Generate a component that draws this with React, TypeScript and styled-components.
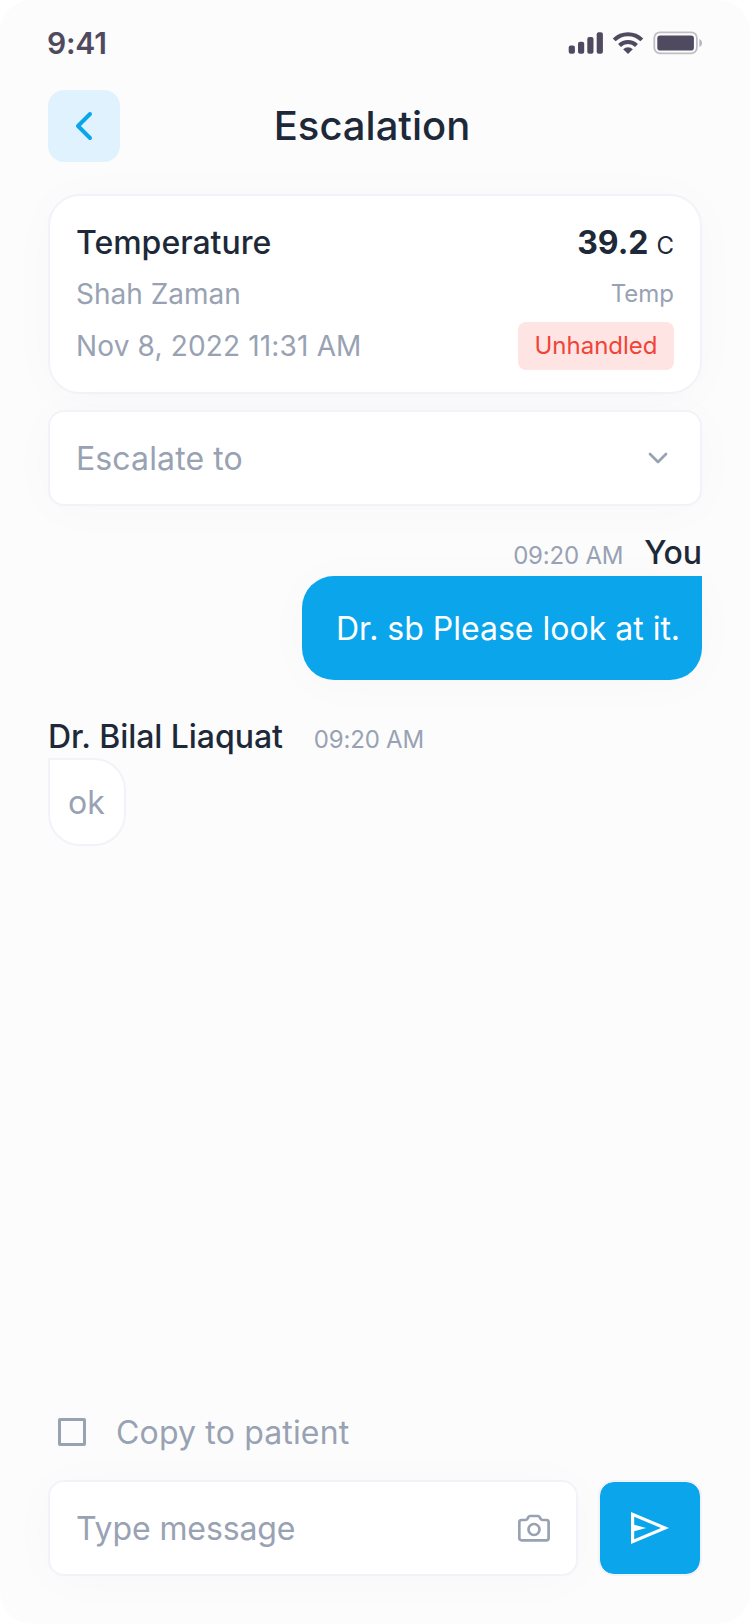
import React from "react";
import styled, { createGlobalStyle } from "styled-components";

const color = {
  ink: "#1d2939",
  muted: "#98a2b3",
  status: "#4f4a5f",
  brand: "#0ba5ec",
  line: "#f2f2f9",
};

const Global = createGlobalStyle`
  * { box-sizing: border-box; }
  body {
    margin: 0;
    background: #fff;
    font-family: Inter, "Liberation Sans", sans-serif;
    font-optical-sizing: none;
  }
  button, input { font: inherit; }
`;

const Screen = styled.main`
  width: 750px;
  height: 1624px;
  padding: 0 48px 48px;
  display: flex;
  flex-direction: column;
  background: #fcfcfc;
  border-radius: 32px;
`;

const StatusBar = styled.div`
  height: 90px;
  margin-left: -1px;
  padding-bottom: 4px;
  display: flex;
  align-items: center;
  justify-content: space-between;
`;

const Text = styled.span<{
  $size?: number;
  $weight?: number;
  $color?: string;
  $spacing?: number;
}>`
  font-size: ${(p) => p.$size ?? 32}px;
  font-weight: ${(p) => p.$weight ?? 400};
  color: ${(p) => p.$color ?? color.muted};
  letter-spacing: ${(p) => p.$spacing ?? 0}px;
  line-height: 1.2;
  white-space: nowrap;
`;

const Header = styled.header`
  display: grid;
  grid-template-columns: 72px 1fr 78px;
  align-items: center;
  height: 72px;
  margin-bottom: 32px;
`;

const BackButton = styled.button`
  width: 72px;
  height: 72px;
  padding: 0;
  border: 0;
  border-radius: 16px;
  background: #e0f2fe;
  display: grid;
  place-items: center;
`;

const Title = styled.h1`
  margin: 0;
  text-align: center;
  font-size: 40px;
  font-weight: 500;
  line-height: 48px;
  color: ${color.ink};
`;

const Panel = styled.section`
  background: #fff;
  border: 2px solid ${color.line};
  box-shadow: 0 4px 50px rgba(0, 0, 0, 0.022);
`;

const ReadingCard = styled(Panel)`
  height: 200px;
  border-radius: 32px;
  padding: 28px 26px 22px;
  margin-bottom: 16px;
`;

const CardRow = styled.div<{ $height: number; $gap?: number; $align?: string }>`
  height: ${(p) => p.$height}px;
  margin-bottom: ${(p) => p.$gap ?? 0}px;
  display: flex;
  align-items: ${(p) => p.$align ?? "center"};
  justify-content: space-between;
`;

const CardDetail = styled(Text)`
  padding-top: 2px;
`;

const Reading = styled.div`
  display: flex;
  align-items: baseline;
  gap: 8px;
`;

const Badge = styled.span`
  height: 48px;
  width: 156px;
  border-radius: 8px;
  background: #ffe4e4;
  color: #f04438;
  font-size: 24px;
  font-weight: 400;
  line-height: 48px;
  text-align: center;
`;

const Field = styled(Panel)<{ $right: number }>`
  height: 96px;
  border-radius: 16px;
  padding: 0 ${(p) => p.$right}px 0 26px;
  display: flex;
  align-items: center;
  justify-content: space-between;

  & > span { padding-top: 2px; }
`;

const Conversation = styled.section`
  flex: 1;
  display: flex;
  flex-direction: column;
`;

const Message = styled.article<{ $mine?: boolean; $top: number; $gap: number }>`
  margin-top: ${(p) => p.$top}px;
  display: flex;
  flex-direction: column;
  align-items: ${(p) => (p.$mine ? "flex-end" : "flex-start")};
  gap: ${(p) => p.$gap}px;
`;

const Byline = styled.div<{ $gap: number }>`
  height: 38px;
  display: flex;
  align-items: baseline;
  gap: ${(p) => p.$gap}px;
`;

const SentBubble = styled.div`
  width: 400px;
  height: 104px;
  padding: 2px 0 0 34px;
  display: flex;
  align-items: center;
  border-radius: 32px 0 32px 32px;
  background: ${color.brand};
  box-shadow: 0 4px 50px rgba(0, 0, 0, 0.022);
`;

const ReceivedBubble = styled.div`
  width: 78px;
  height: 88px;
  padding: 2px 0 0 18px;
  display: flex;
  align-items: center;
  border: 2px solid ${color.line};
  border-radius: 0 32px 32px 32px;
  background: #fff;
`;

const CopyOption = styled.label`
  height: 38px;
  margin: 0 0 29px 10px;
  display: flex;
  align-items: center;
  gap: 30px;

  & > span:last-child { padding-top: 2px; }
`;

const Checkbox = styled.span`
  width: 28px;
  height: 28px;
  border: 3px solid ${color.muted};
  border-radius: 2px;
`;

const Composer = styled.div`
  display: flex;
  gap: 20px;
`;

const MessageField = styled(Field)`
  width: 530px;
`;

const SendButton = styled.button`
  width: 104px;
  height: 96px;
  padding: 0;
  border: 2px solid ${color.line};
  border-radius: 16px;
  background: ${color.brand};
  background-clip: padding-box;
  display: grid;
  place-items: center;
`;

const StatusIcons = () => (
  <svg width="134" height="24" viewBox="568 31 134 24" fill={color.status}>
    <rect x="568.7" y="45.5" width="6.2" height="8.3" rx="2" />
    <rect x="578" y="41.7" width="6.2" height="12.1" rx="2" />
    <rect x="587.3" y="37" width="6.2" height="16.8" rx="2" />
    <rect x="596.7" y="32.2" width="6.2" height="21.6" rx="2" />
    <g fill="none" stroke={color.status}>
      <path d="M614.2 39.9a19.5 19.5 0 0 1 27.6 0" strokeWidth="4.1" />
      <path d="M619.5 45.5a12 12 0 0 1 17 0" strokeWidth="4.1" />
    </g>
    <path d="M623.2 49.3a6.8 6.8 0 0 1 9.6 0L628 54z" />
    <rect x="654.3" y="32.3" width="42.6" height="21" rx="5.6" fill="none" stroke={color.status} strokeOpacity=".35" strokeWidth="1.8" />
    <rect x="657.3" y="35.5" width="36.6" height="15" rx="2.8" />
    <path d="M699.3 39v8c1.7-.7 2.7-2.2 2.7-4s-1-3.3-2.7-4z" fillOpacity=".4" />
  </svg>
);

const BackIcon = () => (
  <svg width="24" height="32" viewBox="0 0 24 32" fill="none" stroke={color.brand} strokeWidth="4" strokeLinecap="round" strokeLinejoin="round">
    <path d="M18 4 6 16l12 12" />
  </svg>
);

const DownIcon = () => (
  <svg width="20" height="12" viewBox="0 0 20 12" fill="none" stroke={color.muted} strokeWidth="2.7" strokeLinecap="round" strokeLinejoin="round">
    <path d="m2 2 8 8 8-8" />
  </svg>
);

const CameraIcon = () => (
  <svg width="32" height="28" viewBox="0 0 32 28" fill="none" stroke={color.muted} strokeWidth="2.7" strokeLinejoin="round">
    <path d="M3.4 6H7.5c.8 0 1.5-.4 1.9-1.1l1.1-2c.3-.6.9-.9 1.5-.9h8c.6 0 1.2.3 1.5.9l1.1 2c.4.7 1.1 1.1 1.9 1.1h4.1A2.2 2.2 0 0 1 30.6 8.2v16A2.2 2.2 0 0 1 28.4 26.3H3.5a2.2 2.2 0 0 1-2.2-2.2v-16A2.2 2.2 0 0 1 3.4 6z" />
    <circle cx="16" cy="15.5" r="5.5" />
  </svg>
);

const SendIcon = () => (
  <svg width="38" height="32" viewBox="0 0 38 32">
    <path fillRule="evenodd" fill="#fff" d="M0 0 38 16 0 32zM3.2 4.8v8L15 16 3.2 19.2v8L30 16z" />
  </svg>
);

export default function App() {
  return (
    <>
      <Global />
      <Screen>
        <StatusBar>
          <Text $size={30} $weight={600} $color={color.status} $spacing={-0.2}>9:41</Text>
          <StatusIcons />
        </StatusBar>
        <Header>
          <BackButton aria-label="Back"><BackIcon /></BackButton>
          <Title>Escalation</Title>
        </Header>
        <ReadingCard>
          <CardRow $height={38} $gap={15} $align="baseline">
            <Text $weight={500} $color={color.ink}>Temperature</Text>
            <Reading>
              <Text $weight={700} $color={color.ink}>39.2</Text>
              <Text $size={24} $color={color.ink}>C</Text>
            </Reading>
          </CardRow>
          <CardRow $height={34} $gap={11}>
            <CardDetail $size={28}>Shah Zaman</CardDetail>
            <Text $size={24}>Temp</Text>
          </CardRow>
          <CardRow $height={48}>
            <CardDetail $size={28} $spacing={0.16}>Nov 8, 2022 11:31 AM</CardDetail>
            <Badge>Unhandled</Badge>
          </CardRow>
        </ReadingCard>
        <Field $right={32}>
          <Text $spacing={0.12}>Escalate to</Text>
          <DownIcon />
        </Field>
        <Conversation>
          <Message $mine $top={28} $gap={4}>
            <Byline $gap={21}>
              <Text $size={24} $spacing={-0.2}>09:20 AM</Text>
              <Text $weight={500} $color={color.ink} $spacing={-0.1}>You</Text>
            </Byline>
            <SentBubble><Text $color="#fff">Dr. sb Please look at it.</Text></SentBubble>
          </Message>
          <Message $top={38} $gap={2}>
            <Byline $gap={31}>
              <Text $weight={500} $color={color.ink} $spacing={-0.05}>Dr. Bilal Liaquat</Text>
              <Text $size={24} $spacing={-0.2}>09:20 AM</Text>
            </Byline>
            <ReceivedBubble><Text>ok</Text></ReceivedBubble>
          </Message>
        </Conversation>
        <CopyOption>
          <Checkbox role="checkbox" aria-checked="false" />
          <Text $spacing={0.16}>Copy to patient</Text>
        </CopyOption>
        <Composer>
          <MessageField $right={26}>
            <Text $spacing={-0.1}>Type message</Text>
            <CameraIcon />
          </MessageField>
          <SendButton aria-label="Send"><SendIcon /></SendButton>
        </Composer>
      </Screen>
    </>
  );
}
